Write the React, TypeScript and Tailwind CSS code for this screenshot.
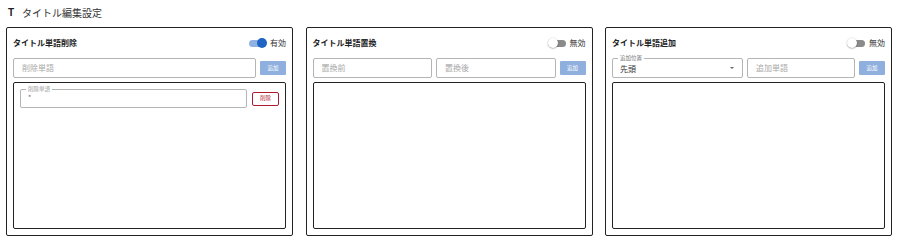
import React from "react";

const font = { fontFamily: '"Noto Sans CJK JP", "Noto Sans", sans-serif' };

function Toggle({ on }: { on: boolean }) {
  return (
    <div className="relative w-[19px] h-[10px] flex items-center">
      <div className={`w-[17px] h-[7px] rounded-full ml-[1px] ${on ? "bg-[#8fb2e3]" : "bg-[#8a8a8a]"}`} />
      <div
        className={`absolute top-0 w-[10px] h-[10px] rounded-full ${
          on ? "right-0 bg-[#1f63c3]" : "left-0 bg-white shadow-[0_0.5px_1.5px_rgba(0,0,0,0.45)]"
        }`}
      />
    </div>
  );
}

function Header({ title, on }: { title: string; on: boolean }) {
  return (
    <div className="h-[18px] flex items-center justify-between">
      <span className="text-[8px] font-bold text-[#222]">{title}</span>
      <div className="flex items-center gap-[3px] pr-[0px]">
        <Toggle on={on} />
        <span className="text-[8px] text-[#333]">{on ? "有効" : "無効"}</span>
      </div>
    </div>
  );
}

function Input({ placeholder, className = "" }: { placeholder: string; className?: string }) {
  return (
    <div className={`h-[20px] border border-[#b5b5b5] rounded-[2px] flex items-center pl-[8px] ${className}`}>
      <span className="text-[8px] text-[#a8a8a8]">{placeholder}</span>
    </div>
  );
}

function AddButton() {
  return (
    <div className="w-[26px] h-[14px] bg-[#8fb0de] rounded-[1px] flex items-center justify-center shrink-0">
      <span className="text-[5.5px] text-white">追加</span>
    </div>
  );
}

function Card({ children }: { children: React.ReactNode }) {
  return (
    <div className="border-[1.5px] border-[#222] rounded-[2px] h-[209px] px-[6px] pt-[6px] pb-[6px] flex flex-col bg-white">
      {children}
    </div>
  );
}

function ListBox({ children }: { children?: React.ReactNode }) {
  return (
    <div className="mt-[4px] flex-1 border-[1.5px] border-[#222] rounded-[2px] px-[6px] pt-[6px]">{children}</div>
  );
}

export default function App() {
  return (
    <div className="w-[899px] h-[246px] bg-white" style={font}>
      <div className="h-[25px] flex items-center pl-[8px]">
        <span className="text-[10px] font-bold text-[#222] w-[14px]" style={{ fontFamily: '"Liberation Sans", sans-serif' }}>
          T
        </span>
        <span className="text-[10px] text-[#333]">タイトル編集設定</span>
      </div>
      <div className="grid grid-cols-3 gap-x-[12.5px] pl-[6px] pr-[7px] mt-[2px]">
        <Card>
          <Header title="タイトル単語削除" on={true} />
          <div className="mt-[6px] flex items-center gap-[4px]">
            <Input placeholder="削除単語" className="flex-1" />
            <AddButton />
          </div>
          <ListBox>
            <div className="flex items-center gap-[5px]">
              <div className="relative flex-1 h-[19px] border border-[#b5b5b5] rounded-[2px]">
                <span className="absolute -top-[4px] left-[5px] bg-white px-[2px] text-[5.5px] leading-[7px] text-[#999]">
                  削除単語
                </span>
                <span className="absolute top-[3px] left-[7px] text-[7px] leading-[8px] text-[#666]">*</span>
              </div>
              <div className="w-[27px] h-[14px] border border-[#b0192f] rounded-[2px] flex items-center justify-center">
                <span className="text-[5.5px] text-[#b0192f]">削除</span>
              </div>
            </div>
          </ListBox>
        </Card>
        <Card>
          <Header title="タイトル単語置換" on={false} />
          <div className="mt-[6px] flex items-center gap-[4px]">
            <Input placeholder="置換前" className="flex-1" />
            <Input placeholder="置換後" className="flex-1" />
            <AddButton />
          </div>
          <ListBox />
        </Card>
        <Card>
          <Header title="タイトル単語追加" on={false} />
          <div className="mt-[6px] flex items-center gap-[4px]">
            <div className="relative w-[131px] h-[20px] border border-[#b5b5b5] rounded-[2px] flex items-center pl-[7px]">
              <span className="absolute -top-[4px] left-[5px] bg-white px-[2px] text-[5.5px] leading-[7px] text-[#777]">
                追加位置
              </span>
              <span className="text-[8px] text-[#333] mt-[1px]">先頭</span>
              <span className="absolute right-[8px] top-[8px] w-0 h-0 border-l-[2.5px] border-r-[2.5px] border-t-[2.5px] border-l-transparent border-r-transparent border-t-[#666]" />
            </div>
            <Input placeholder="追加単語" className="flex-1" />
            <AddButton />
          </div>
          <ListBox />
        </Card>
      </div>
    </div>
  );
}
